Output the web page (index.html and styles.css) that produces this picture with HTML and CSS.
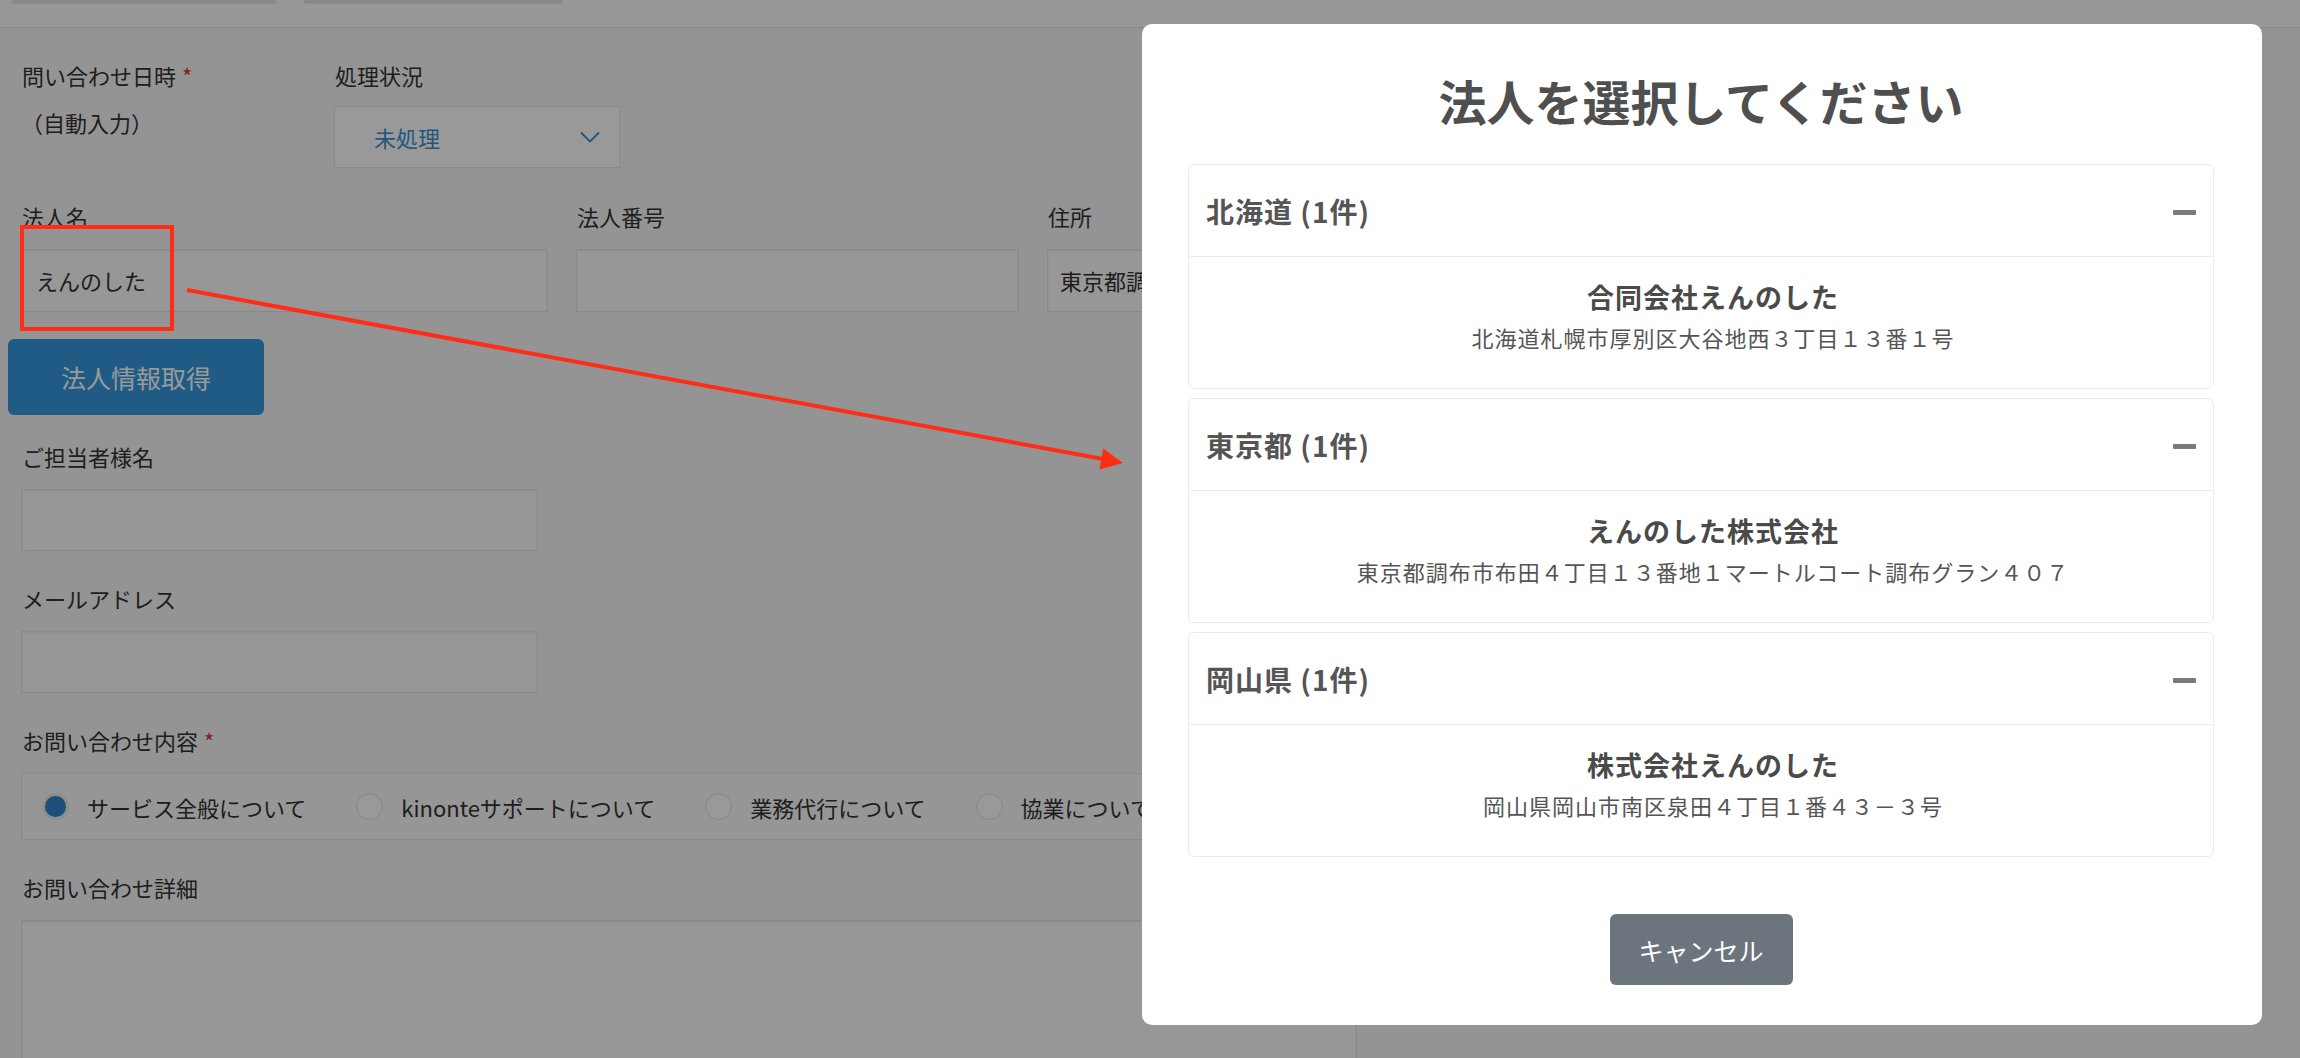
FILE: index.html
```html
<!DOCTYPE html>
<html lang="ja">
<head>
<meta charset="utf-8">
<title>お問い合わせ登録</title>
<link rel="stylesheet" href="styles.css">
</head>
<body>
<div class="page">
  <div class="topbar">
    <div class="stub stub-a"></div>
    <div class="stub stub-b"></div>
  </div>

  <form class="form">
    <div class="row row-top">
      <div class="field f-date">
        <div class="label">問い合わせ日時<span class="req">*</span></div>
        <div class="auto">（自動入力）</div>
      </div>
      <div class="field">
        <div class="label">処理状況</div>
        <div class="select">
          <span class="select-val">未処理</span>
          <svg class="chev" width="20" height="12" viewBox="0 0 20 12"><path d="M1 1.5 L10 10.5 L19 1.5" fill="none" stroke="#3a8fd0" stroke-width="1.8"/></svg>
        </div>
      </div>
    </div>

    <div class="row row-corp">
      <div class="field">
        <div class="label">法人名</div>
        <div class="input">えんのした</div>
      </div>
      <div class="field">
        <div class="label">法人番号</div>
        <div class="input"></div>
      </div>
      <div class="field">
        <div class="label">住所</div>
        <div class="input addr">東京都調布市布田</div>
      </div>
    </div>

    <button type="button" class="btn-fetch">法人情報取得</button>

    <div class="field block">
      <div class="label">ご担当者様名</div>
      <div class="input w-half"></div>
    </div>

    <div class="field block">
      <div class="label">メールアドレス</div>
      <div class="input w-half"></div>
    </div>

    <div class="field block">
      <div class="label">お問い合わせ内容<span class="req">*</span></div>
      <div class="radios">
        <label class="radio"><span class="dot on"></span>サービス全般について</label>
        <label class="radio"><span class="dot"></span>kinonteサポートについて</label>
        <label class="radio"><span class="dot"></span>業務代行について</label>
        <label class="radio"><span class="dot"></span>協業について</label>
      </div>
    </div>

    <div class="field block">
      <div class="label">お問い合わせ詳細</div>
      <div class="textarea"></div>
    </div>
  </form>
</div>

<div class="backdrop"></div>

<svg class="annot" width="2300" height="1058" viewBox="0 0 2300 1058">
  <rect x="22" y="227" width="150" height="102" fill="none" stroke="#ff2d16" stroke-width="4"/>
  <line x1="187" y1="290" x2="1103" y2="459" stroke="#ff2d16" stroke-width="4"/>
  <polygon points="1123,463 1099.5,469.5 1103.2,448.5" fill="#ff2d16"/>
</svg>

<div class="modal">
  <h2 class="modal-title">法人を選択してください</h2>

  <div class="group">
    <div class="group-head"><span>北海道 (1件)</span><i class="minus"></i></div>
    <div class="group-body">
      <div class="corp-name">合同会社えんのした</div>
      <div class="corp-addr">北海道札幌市厚別区大谷地西３丁目１３番１号</div>
    </div>
  </div>

  <div class="group">
    <div class="group-head"><span>東京都 (1件)</span><i class="minus"></i></div>
    <div class="group-body">
      <div class="corp-name">えんのした株式会社</div>
      <div class="corp-addr">東京都調布市布田４丁目１３番地１マートルコート調布グラン４０７</div>
    </div>
  </div>

  <div class="group">
    <div class="group-head"><span>岡山県 (1件)</span><i class="minus"></i></div>
    <div class="group-body">
      <div class="corp-name">株式会社えんのした</div>
      <div class="corp-addr">岡山県岡山市南区泉田４丁目１番４３－３号</div>
    </div>
  </div>

  <div class="modal-foot">
    <button type="button" class="btn-cancel">キャンセル</button>
  </div>
</div>
</body>
</html>
```

FILE: styles.css
```css
html, body {
  margin: 0;
  padding: 0;
  width: 2300px;
  height: 1058px;
  overflow: hidden;
}
body {
  font-family: "Noto Sans CJK JP", "Noto Sans", sans-serif;
  color: #333;
  background: #f7f7f7;
  position: relative;
}

.page {
  width: 2300px;
  height: 1058px;
  overflow: hidden;
}

.topbar {
  height: 27px;
  background: #fdfdfd;
  border-bottom: 1px solid #e6e6e6;
  display: flex;
  gap: 28px;
  padding-left: 12px;
  align-items: flex-start;
}
.stub {
  height: 2px;
  background: #e4e4e4;
  box-shadow: 0 1px 2px rgba(0,0,0,0.18);
}
.stub-a { width: 264px; }
.stub-b { width: 258px; }

.form {
  padding: 31px 0 0 21px;
}

.label {
  font-size: 22px;
  line-height: 32px;
  color: #333;
  padding-left: 1px;
}
.req {
  color: #d9352b;
  margin-left: 6px;
  font-size: 22px;
}

.row-top {
  display: grid;
  grid-template-columns: 313px 286px;
}
.auto {
  margin-top: 15px;
  font-size: 22px;
  line-height: 32px;
}
.select {
  margin-top: 15px;
  height: 62px;
  box-sizing: border-box;
  background: #fff;
  border: 1px solid #e8e8e8;
  display: flex;
  align-items: center;
  justify-content: space-between;
  padding: 0 19px 0 39px;
}
.select-val {
  color: #3a8fd0;
  font-size: 22px;
}
.chev { display: block; }

.row-corp {
  margin-top: 32px;
  display: grid;
  grid-template-columns: 527px 443px 310px;
  column-gap: 28px;
}
.input {
  margin-top: 17px;
  height: 63px;
  box-sizing: border-box;
  background: #fcfcfc;
  border: 1px solid #e4e4e4;
  box-shadow: inset 0 1px 3px rgba(0,0,0,0.07);
  font-size: 22px;
  line-height: 61px;
  padding-left: 14px;
  color: #333;
  white-space: nowrap;
}
.input.addr { padding-left: 12px; }

.btn-fetch {
  display: block;
  margin: 27px 0 0 -13px;
  width: 256px;
  height: 76px;
  border: none;
  border-radius: 6px;
  background: #3598dc;
  color: #fff;
  font-family: inherit;
  font-size: 25px;
}

.block { margin-top: 25px; }
.block + .block { margin-top: 31px; }

.w-half {
  width: 517px;
  height: 62px;
  margin-top: 17px;
}

.radios {
  margin-top: 17px;
  width: 1336px;
  height: 67px;
  box-sizing: border-box;
  background: #fafafa;
  border: 1px solid #e4e4e4;
  display: flex;
  align-items: center;
  gap: 50px;
  padding-left: 20px;
}
.radio {
  display: flex;
  align-items: center;
  gap: 18px;
  font-size: 22px;
  color: #333;
  white-space: nowrap;
}
.dot {
  width: 27px;
  height: 27px;
  box-sizing: border-box;
  border-radius: 50%;
  background: #fff;
  border: 1px solid #e2e2e2;
  box-shadow: inset 0 1px 2px rgba(0,0,0,0.06);
}
.dot.on {
  background: #2f86c8;
  border: 3px solid #ececec;
}

.textarea {
  margin-top: 17px;
  width: 1336px;
  height: 200px;
  box-sizing: border-box;
  background: #fcfcfc;
  border: 1px solid #e4e4e4;
  box-shadow: inset 0 1px 3px rgba(0,0,0,0.07);
}

.backdrop {
  position: absolute;
  inset: 0;
  background: rgba(0,0,0,0.4);
  z-index: 1;
}

.annot {
  position: absolute;
  left: 0;
  top: 0;
  z-index: 2;
  pointer-events: none;
}

.modal {
  position: absolute;
  left: 1142px;
  top: 24px;
  width: 1120px;
  box-sizing: border-box;
  background: #fff;
  border-radius: 10px;
  padding: 43px 48px 40px 46px;
  z-index: 3;
}
.modal-title {
  margin: 0 0 31px;
  text-align: center;
  font-size: 48px;
  line-height: 66px;
  font-weight: 700;
  color: #4f4f4f;
}

.group {
  border: 1px solid #ececec;
  border-radius: 6px;
  margin-bottom: 9px;
}
.group:last-of-type { margin-bottom: 0; }
.group-head {
  height: 92px;
  box-sizing: border-box;
  border-bottom: 1px solid #ececec;
  display: flex;
  align-items: center;
  justify-content: space-between;
  padding: 0 17px 0 17px;
  font-size: 28px;
  letter-spacing: 1px;
  font-weight: 700;
  color: #555;
}
.minus {
  display: block;
  width: 23px;
  height: 5px;
  background: #7a7a7a;
  border-radius: 1px;
  margin-top: 3px;
}
.group-body {
  box-sizing: border-box;
  height: 131px;
  padding: 22px 0 0 24px;
  text-align: center;
}
.corp-name {
  font-size: 27px;
  letter-spacing: 1px;
  line-height: 36px;
  font-weight: 700;
  color: #4a4a4a;
}
.corp-addr {
  margin-top: 7px;
  font-size: 22px;
  letter-spacing: 1px;
  line-height: 30px;
  color: #555;
}

.modal-foot {
  margin-top: 57px;
  display: flex;
  justify-content: center;
}
.btn-cancel {
  width: 183px;
  height: 71px;
  border: none;
  border-radius: 6px;
  background: #6c757d;
  color: #fff;
  font-family: inherit;
  font-size: 25px;
}
```
